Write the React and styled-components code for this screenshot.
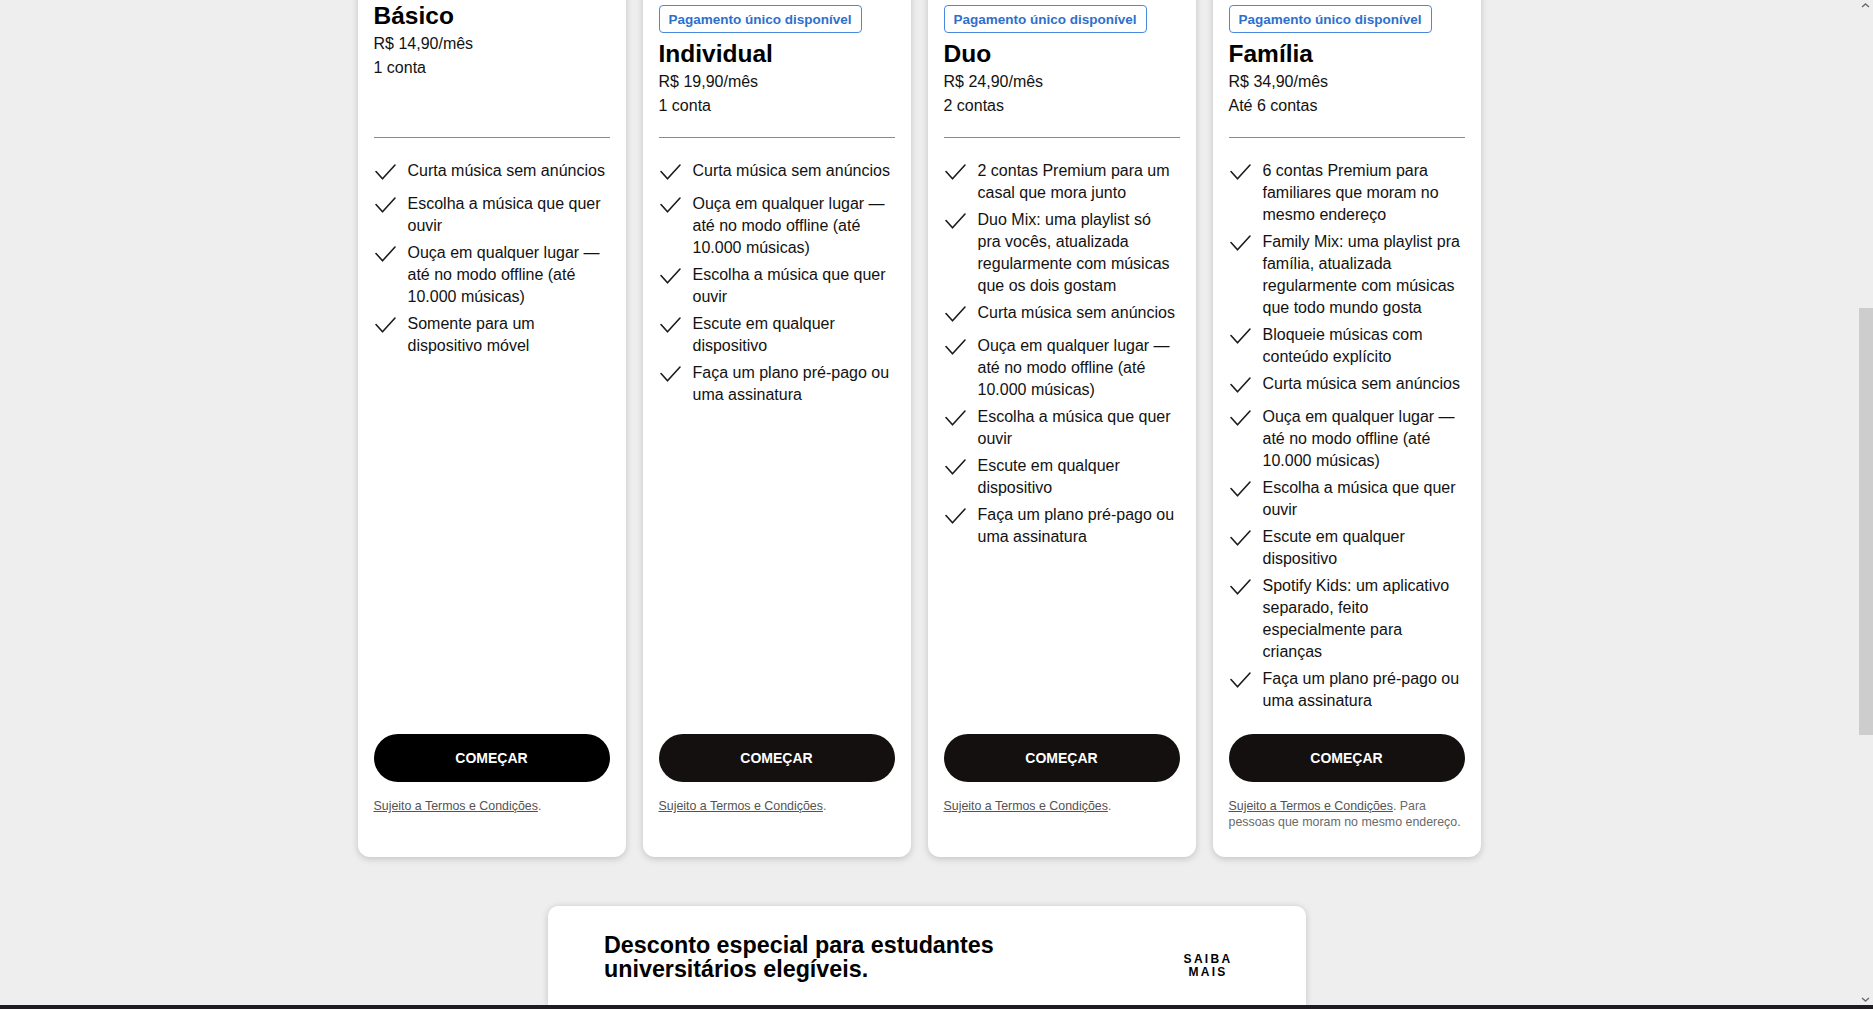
import React from "react";
import styled, { createGlobalStyle } from "styled-components";

const GlobalStyle = createGlobalStyle`
  html, body {
    margin: 0;
    padding: 0;
    overflow: hidden;
    background: #eeeeee;
  }
  * { box-sizing: border-box; }
  body {
    font-family: "Liberation Sans", Arial, sans-serif;
    color: #000;
  }
`;

const Screen = styled.div`
  display: flex;
  flex-direction: column;
  width: 100vw;
  height: 100vh;
`;

const Viewport = styled.div`
  display: flex;
  flex: 1;
  min-height: 0;
`;

const Main = styled.main`
  flex: 1;
  overflow: hidden;
  background: #eeeeee;
`;

const Content = styled.div`
  margin-top: -16px;
`;

const PlansSection = styled.section`
  padding-right: 20px;
`;

const PlansGrid = styled.div`
  display: grid;
  grid-template-columns: repeat(4, 268px);
  gap: 17px;
  justify-content: center;
`;

const Card = styled.article`
  background: #fff;
  border-radius: 12px;
  box-shadow: 0 2px 7px rgba(0, 0, 0, 0.18);
  padding: 16px 16px 27px;
  display: flex;
  flex-direction: column;
`;

const CardHeader = styled.header`
  height: 138px;
  border-bottom: 1px solid #8a8a8a;
  display: flex;
  flex-direction: column;
`;

const Badge = styled.span`
  align-self: flex-start;
  display: flex;
  align-items: center;
  height: 28px;
  margin: 5px 0;
  padding: 0 9px;
  border: 1px solid #4a88de;
  border-radius: 4px;
  color: #2e6fcc;
  font-size: 13.5px;
  font-weight: 700;
`;

const PlanName = styled.h3`
  margin: 0;
  font-size: 24.5px;
  line-height: 32px;
  font-weight: 700;
  color: #000;
`;

const PlanLine = styled.p`
  margin: 0;
  font-size: 16px;
  line-height: 24px;
  color: #121212;
`;

const FeatureList = styled.ul`
  list-style: none;
  margin: 22px 0 0;
  padding: 0;
  display: flex;
  flex-direction: column;
  gap: 5px;
  flex: 1;
`;

const FeatureItem = styled.li`
  display: flex;
  gap: 10px;
  min-height: 28px;
  font-size: 16px;
  line-height: 22px;
  color: #121212;
`;

const FeatureText = styled.span`
  width: 199px;
`;

const CheckIcon = styled.svg`
  flex: 0 0 24px;
  width: 24px;
  height: 24px;
`;

const CardFooter = styled.div`
  margin-top: 22px;
  display: flex;
  flex-direction: column;
`;

const StartButton = styled.button`
  height: 48px;
  width: 100%;
  border: none;
  border-radius: 24px;
  background: ${(p) => (p.$hover ? "#000" : "#141010")};
  color: #fff;
  font-family: "Liberation Sans", Arial, sans-serif;
  font-size: 14px;
  font-weight: 700;
  cursor: pointer;
`;

const Terms = styled.p`
  margin: 16px 0 0;
  min-height: 32px;
  font-size: 12.4px;
  line-height: 16px;
  color: #6a6a6a;
`;

const TermsLink = styled.a`
  color: #535353;
  text-decoration: underline;
`;

const BannerSection = styled.section`
  margin-top: 49px;
  display: flex;
  justify-content: center;
  padding-right: 4px;
`;

const Banner = styled.div`
  width: 758px;
  height: 99px;
  background: #fff;
  border-radius: 10px 10px 0 0;
  box-shadow: 0 1px 7px rgba(0, 0, 0, 0.18);
  padding: 27px 71px 0 56px;
  display: flex;
  justify-content: space-between;
  align-items: flex-start;
`;

const BannerTitle = styled.h2`
  margin: 0;
  max-width: 420px;
  font-size: 23.3px;
  line-height: 24px;
  font-weight: 700;
  color: #000;
`;

const LearnMore = styled.a`
  margin-top: 20px;
  width: 54px;
  text-align: center;
  font-size: 12px;
  line-height: 13px;
  font-weight: 700;
  letter-spacing: 2.3px;
  color: #000;
  text-decoration: none;
`;

const ScrollTrack = styled.div`
  width: 15px;
  background: #eeeeee;
  display: flex;
  flex-direction: column;
  align-items: stretch;
`;

const ScrollArrow = styled.div`
  height: 17px;
  display: flex;
  align-items: ${(p) => (p.$down ? "flex-end" : "flex-start")};
  justify-content: center;
  padding: ${(p) => (p.$down ? "0 0 3px" : "3px 0 0")};
`;

const ScrollThumb = styled.div`
  margin-left: 1px;
  background: #cdcdcd;
`;

const ScrollSpacer = styled.div`
  flex: 1;
`;

const TaskBar = styled.div`
  height: 4px;
  background: #201b23;
`;

const Check = () => (
  <CheckIcon viewBox="0 0 24 24" fill="none" aria-hidden="true">
    <path d="M2 11.5 L8.5 18.8 L21 5" stroke="#1a1a1a" strokeWidth="1.6" strokeLinecap="round" strokeLinejoin="round" />
  </CheckIcon>
);

const plans = [
  {
    name: "Básico",
    price: "R$ 14,90/mês",
    accounts: "1 conta",
    badge: false,
    hover: true,
    features: [
      "Curta música sem anúncios",
      "Escolha a música que quer ouvir",
      "Ouça em qualquer lugar — até no modo offline (até 10.000 músicas)",
      "Somente para um dispositivo móvel",
    ],
  },
  {
    name: "Individual",
    price: "R$ 19,90/mês",
    accounts: "1 conta",
    badge: true,
    features: [
      "Curta música sem anúncios",
      "Ouça em qualquer lugar — até no modo offline (até 10.000 músicas)",
      "Escolha a música que quer ouvir",
      "Escute em qualquer dispositivo",
      "Faça um plano pré-pago ou uma assinatura",
    ],
  },
  {
    name: "Duo",
    price: "R$ 24,90/mês",
    accounts: "2 contas",
    badge: true,
    features: [
      "2 contas Premium para um casal que mora junto",
      "Duo Mix: uma playlist só pra vocês, atualizada regularmente com músicas que os dois gostam",
      "Curta música sem anúncios",
      "Ouça em qualquer lugar — até no modo offline (até 10.000 músicas)",
      "Escolha a música que quer ouvir",
      "Escute em qualquer dispositivo",
      "Faça um plano pré-pago ou uma assinatura",
    ],
  },
  {
    name: "Família",
    price: "R$ 34,90/mês",
    accounts: "Até 6 contas",
    badge: true,
    extra: " Para pessoas que moram no mesmo endereço.",
    features: [
      "6 contas Premium para familiares que moram no mesmo endereço",
      "Family Mix: uma playlist pra família, atualizada regularmente com músicas que todo mundo gosta",
      "Bloqueie músicas com conteúdo explícito",
      "Curta música sem anúncios",
      "Ouça em qualquer lugar — até no modo offline (até 10.000 músicas)",
      "Escolha a música que quer ouvir",
      "Escute em qualquer dispositivo",
      "Spotify Kids: um aplicativo separado, feito especialmente para crianças",
      "Faça um plano pré-pago ou uma assinatura",
    ],
  },
];

const Chevron = ({ down }) => (
  <svg width="9" height="5" viewBox="0 0 9 5" aria-hidden="true">
    <path
      d={down ? "M1 1 L4.5 4 L8 1" : "M1 4 L4.5 1 L8 4"}
      stroke="#6b6b6b"
      strokeWidth="1.4"
      fill="none"
    />
  </svg>
);

export default function App() {
  return (
    <>
      <GlobalStyle />
      <Screen>
        <Viewport>
          <Main>
            <Content>
              <PlansSection>
                <PlansGrid>
                  {plans.map((plan) => (
                    <Card key={plan.name}>
                      <CardHeader>
                        {plan.badge && <Badge>Pagamento único disponível</Badge>}
                        <PlanName>{plan.name}</PlanName>
                        <PlanLine>{plan.price}</PlanLine>
                        <PlanLine>{plan.accounts}</PlanLine>
                      </CardHeader>
                      <FeatureList>
                        {plan.features.map((f) => (
                          <FeatureItem key={f}>
                            <Check />
                            <FeatureText>{f}</FeatureText>
                          </FeatureItem>
                        ))}
                      </FeatureList>
                      <CardFooter>
                        <StartButton $hover={plan.hover}>COMEÇAR</StartButton>
                        <Terms>
                          <TermsLink href="#">Sujeito a Termos e Condições</TermsLink>.
                          {plan.extra}
                        </Terms>
                      </CardFooter>
                    </Card>
                  ))}
                </PlansGrid>
              </PlansSection>
              <BannerSection>
                <Banner>
                  <BannerTitle>Desconto especial para estudantes universitários elegíveis.</BannerTitle>
                  <LearnMore href="#">SAIBA MAIS</LearnMore>
                </Banner>
              </BannerSection>
            </Content>
          </Main>
          <ScrollTrack>
            <ScrollArrow>
              <Chevron />
            </ScrollArrow>
            <ScrollThumb style={{ marginTop: 291, height: 427 }} />
            <ScrollSpacer />
            <ScrollArrow $down>
              <Chevron down />
            </ScrollArrow>
          </ScrollTrack>
        </Viewport>
        <TaskBar />
      </Screen>
    </>
  );
}
